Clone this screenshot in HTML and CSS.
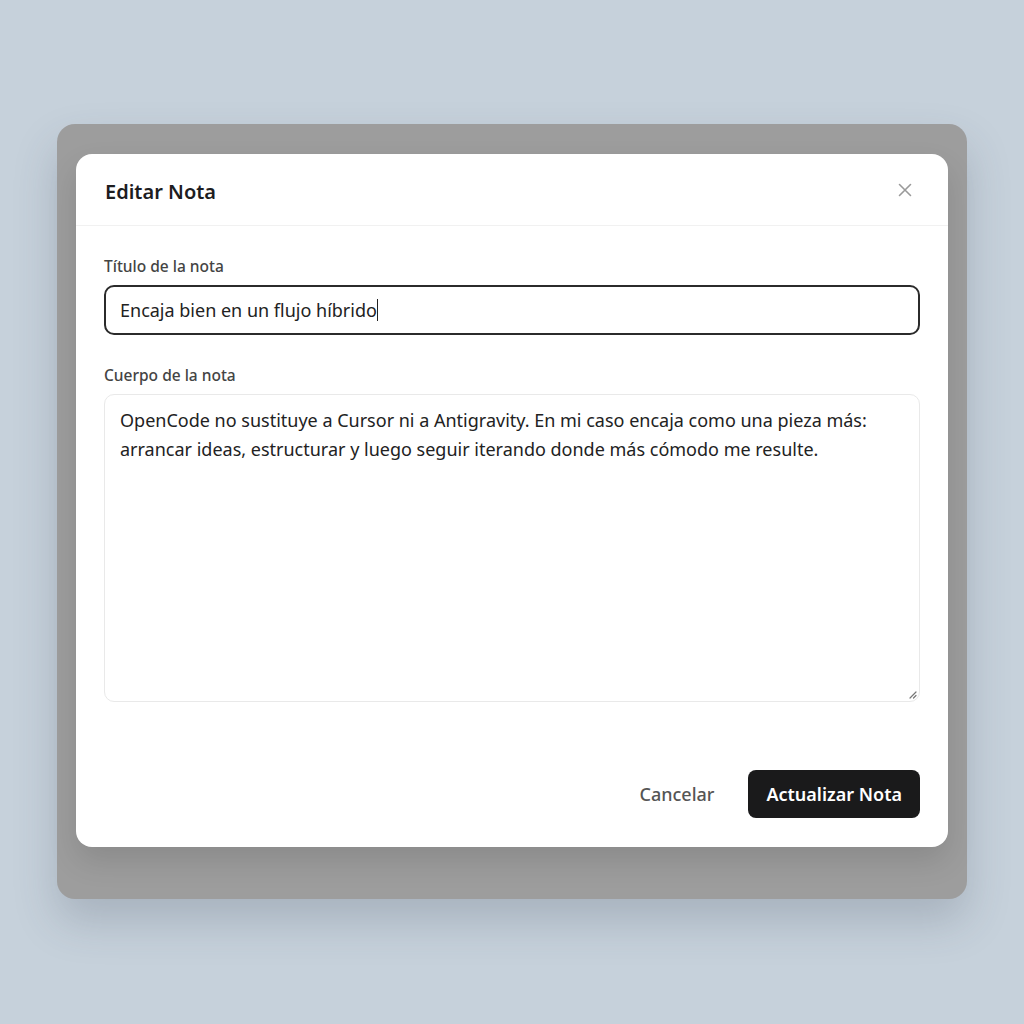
FILE: index.html
```html
<!DOCTYPE html>
<html lang="es">
<head>
    <meta charset="UTF-8">
    <title>Editar Nota</title>
    <link rel="stylesheet" href="styles.css">
</head>
<body>
    <div class="backdrop">
        <div class="modal">
            <!-- Header -->
            <div class="modal-header">
                <h2>Editar Nota</h2>
                <button class="close-btn" aria-label="Cerrar">
                    <svg width="14" height="14" viewBox="0 0 14 14">
                        <path d="M1.5 1.5 L12.5 12.5 M12.5 1.5 L1.5 12.5" stroke="#9a9a9a" stroke-width="1.6" stroke-linecap="round"/>
                    </svg>
                </button>
            </div>

            <!-- Body -->
            <div class="modal-body">
                <label class="field-label" for="title">Título de la nota</label>
                <div class="input-box" id="title">Encaja bien en un flujo híbrido<span class="caret"></span></div>

                <label class="field-label second" for="body">Cuerpo de la nota</label>
                <div class="textarea-box" id="body">
                    OpenCode no sustituye a Cursor ni a Antigravity. En mi caso encaja como una pieza más: arrancar ideas, estructurar y luego seguir iterando donde más cómodo me resulte.
                    <svg class="grip" width="9" height="9" viewBox="0 0 9 9">
                        <path d="M8 2 L2 8 M8 5.5 L5.5 8" stroke="#777" stroke-width="1.2" stroke-linecap="round"/>
                    </svg>
                </div>
            </div>

            <!-- Footer -->
            <div class="modal-footer">
                <button class="btn-cancel">Cancelar</button>
                <button class="btn-primary">Actualizar Nota</button>
            </div>
        </div>
    </div>
</body>
</html>
```

FILE: styles.css
```css
body {
    margin: 0;
    padding: 124px 0 0;
    font-family: "Noto Sans", "Open Sans", sans-serif;
    background-color: #c6d1db;
    display: flex;
    justify-content: center;
    align-items: flex-start;
    min-height: 100vh;
    box-sizing: border-box;
}

.backdrop {
    width: 910px;
    box-sizing: border-box;
    padding: 30px 19px 52px;
    background: #9d9d9d;
    border-radius: 18px;
    box-shadow: 0 22px 44px rgba(60, 70, 85, 0.22);
}

.modal {
    background: #ffffff;
    border-radius: 16px;
    box-shadow: 0 14px 30px rgba(0, 0, 0, 0.12);
    overflow: hidden;
}

.modal-header {
    height: 72px;
    box-sizing: border-box;
    padding: 4px 36px 0 29px;
    border-bottom: 1px solid #f1f1f1;
    display: flex;
    align-items: center;
    justify-content: space-between;
}

.modal-header h2 {
    margin: 0;
    font-size: 20px;
    font-weight: 600;
    color: #1d1d1f;
}

.close-btn {
    border: none;
    background: none;
    padding: 0;
    width: 14px;
    height: 14px;
    margin-top: -4px;
    display: flex;
}

.modal-body {
    padding: 30px 28px 0;
}

.field-label {
    display: block;
    font-size: 15.5px;
    line-height: 20px;
    font-weight: 500;
    color: #444;
    margin-bottom: 9px;
}

.field-label.second {
    margin-top: 30px;
    margin-bottom: 9px;
}

.input-box {
    height: 50px;
    box-sizing: border-box;
    border: 2px solid #2b2b2b;
    border-radius: 10px;
    padding: 0 14px;
    display: flex;
    align-items: center;
    font-size: 18px;
    color: #222;
}

.caret {
    display: inline-block;
    width: 1px;
    height: 22px;
    background: #222;
}

.textarea-box {
    position: relative;
    height: 308px;
    box-sizing: border-box;
    border: 1px solid #e9e9e9;
    border-radius: 10px;
    padding: 11px 15px;
    font-size: 18px;
    line-height: 29px;
    color: #222;
}

.grip {
    position: absolute;
    right: 2px;
    bottom: 2px;
}

.modal-footer {
    padding: 68px 28px 29px;
    display: flex;
    justify-content: flex-end;
    align-items: center;
    gap: 10px;
}

.btn-cancel {
    border: none;
    background: none;
    font-family: inherit;
    font-size: 18px;
    font-weight: 500;
    color: #555;
    height: 48px;
    padding: 0 24px;
}

.btn-primary {
    border: none;
    background: #1a1a1b;
    color: #fff;
    font-family: inherit;
    font-size: 18px;
    font-weight: 600;
    height: 48px;
    padding: 0 18px;
    border-radius: 8px;
}
```
